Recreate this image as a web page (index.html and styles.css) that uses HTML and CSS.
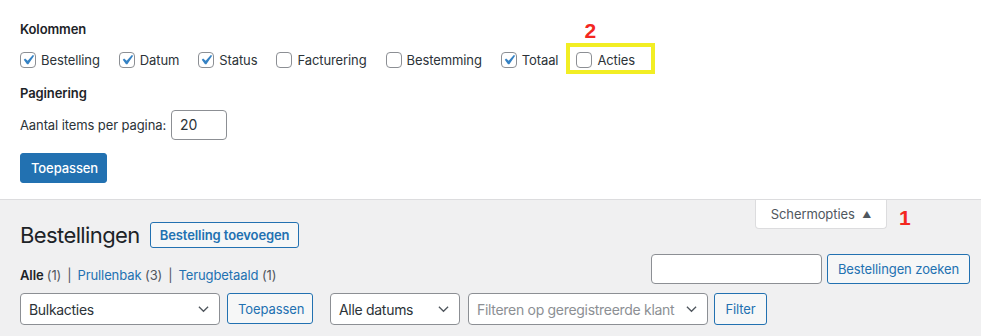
FILE: index.html
```html
<!DOCTYPE html>
<html lang="nl">
<head>
    <meta charset="UTF-8">
    <link rel="stylesheet" href="styles.css">
    <title>Bestellingen</title>
</head>
<body>
    <div class="screen-meta">
        <div class="legend">Kolommen</div>
        <div class="columns">
            <label class="check"><span class="box on"><svg viewBox="0 0 20 20"><path d="M14.83 4.89l1.34.94-5.81 8.38H9.02L5.78 9.67l1.34-1.25 2.57 2.4z"/></svg></span>Bestelling</label>
            <label class="check"><span class="box on"><svg viewBox="0 0 20 20"><path d="M14.83 4.89l1.34.94-5.81 8.38H9.02L5.78 9.67l1.34-1.25 2.57 2.4z"/></svg></span>Datum</label>
            <label class="check"><span class="box on"><svg viewBox="0 0 20 20"><path d="M14.83 4.89l1.34.94-5.81 8.38H9.02L5.78 9.67l1.34-1.25 2.57 2.4z"/></svg></span>Status</label>
            <label class="check"><span class="box"></span>Facturering</label>
            <label class="check"><span class="box"></span>Bestemming</label>
            <label class="check"><span class="box on"><svg viewBox="0 0 20 20"><path d="M14.83 4.89l1.34.94-5.81 8.38H9.02L5.78 9.67l1.34-1.25 2.57 2.4z"/></svg></span>Totaal</label>
            <label class="check marked"><span class="box"></span>Acties
                <span class="highlight"></span>
                <span class="note note-2">2</span>
            </label>
        </div>
        <div class="legend legend-2">Paginering</div>
        <div class="per-page">
            <span>Aantal items per pagina:</span>
            <span class="input num">20</span>
        </div>
        <button class="btn primary">Toepassen</button>
    </div>

    <div class="meta-links">
        <div class="tab">Schermopties <span class="arrow">▲</span></div>
        <span class="note note-1">1</span>
    </div>

    <div class="wrap">
        <div class="title-row">
            <h1>Bestellingen</h1>
            <a class="title-action">Bestelling toevoegen</a>
        </div>
        <div class="list-top">
            <ul class="subsubsub">
                <li class="current">Alle <span class="count">(1)</span></li>
                <li class="sep">|</li>
                <li><a>Prullenbak</a> <span class="count">(3)</span></li>
                <li class="sep">|</li>
                <li><a>Terugbetaald</a> <span class="count">(1)</span></li>
            </ul>
            <div class="search-box">
                <span class="input search"></span>
                <button class="btn">Bestellingen zoeken</button>
            </div>
        </div>
        <div class="tablenav">
            <div class="select bulk">Bulkacties<svg viewBox="0 0 12 8"><path d="M1 1.5l5 5 5-5"/></svg></div>
            <button class="btn apply">Toepassen</button>
            <div class="select dates">Alle datums<svg viewBox="0 0 12 8"><path d="M1 1.5l5 5 5-5"/></svg></div>
            <div class="select customer">Filteren op geregistreerde klant<svg viewBox="0 0 12 8"><path d="M1 1.5l5 5 5-5"/></svg></div>
            <button class="btn filter">Filter</button>
        </div>
    </div>
</body>
</html>
```

FILE: styles.css
```css
*{
    margin: 0;
    padding: 0;
    box-sizing: border-box;
}
body{
    font-family: Inter, "Noto Sans", sans-serif;
    font-size: 13px;
    letter-spacing: -0.1px;
    color: #1d2327;
    background: #f0f0f1;
}

/* screen options panel */
.screen-meta{
    background: #fff;
    border-bottom: 1px solid #dcdcde;
    padding: 20px 20px 16px;
}
.legend{
    font-size: 13px;
    font-weight: 600;
    line-height: 18px;
}
.legend-2{
    margin-top: 14px;
}
.columns{
    display: flex;
    align-items: center;
    height: 20px;
    margin-top: 12px;
}
.check{
    position: relative;
    display: flex;
    align-items: center;
    gap: 5px;
    margin-right: 19px;
    color: #2c3338;
}
.marked{
    margin-left: -1px;
}
.box{
    width: 16px;
    height: 16px;
    border: 1px solid #8c8f94;
    border-radius: 4px;
    background: #fff;
    display: flex;
    align-items: center;
    justify-content: center;
}
.box svg{
    width: 20px;
    height: 20px;
    fill: #3582c4;
    flex: none;
}
.highlight{
    position: absolute;
    left: -10px;
    right: -20px;
    top: -9px;
    bottom: -6px;
    border: 4px solid #f2ee24;
}
.note{
    font-family: "Liberation Sans", Arial, sans-serif;
    font-weight: 700;
    font-size: 21px;
    letter-spacing: 0;
    color: #f3271f;
}
.note-2{
    position: absolute;
    left: 8px;
    top: -33px;
}
.per-page{
    display: flex;
    align-items: center;
    gap: 5px;
    margin-top: 8px;
    color: #2c3338;
}
.input{
    display: block;
    height: 30px;
    border: 1px solid #8c8f94;
    border-radius: 4px;
    background: #fff;
}
.num{
    width: 56px;
    padding: 0 8px;
    line-height: 28px;
    font-size: 14px;
    color: #2c3338;
}
.btn{
    font: inherit;
    letter-spacing: inherit;
    height: 30px;
    padding: 0 10px;
    border: 1px solid #2271b1;
    border-radius: 3px;
    background: #f6f7f7;
    color: #2271b1;
    cursor: pointer;
}
.primary{
    display: block;
    margin-top: 13px;
    width: 87px;
    background: #2271b1;
    color: #fff;
    font-weight: 500;
}

/* tab */
.meta-links{
    float: right;
    position: relative;
    margin-right: 94px;
}
.tab{
    height: 29px;
    width: 132px;
    border: 1px solid #dcdcde;
    border-top: 0;
    border-radius: 0 0 4px 4px;
    background: #fff;
    color: #50575e;
    line-height: 28px;
    text-align: center;
}
.arrow{
    font-size: 9px;
    margin-left: 4px;
    vertical-align: 1px;
}
.note-1{
    position: absolute;
    left: calc(100% + 12px);
    top: 6px;
}

/* page */
.wrap{
    padding: 22px 11px 0 20px;
}
.title-row{
    display: flex;
    align-items: center;
    height: 26px;
}
h1{
    font-size: 22px;
    font-weight: 400;
    letter-spacing: -0.6px;
    line-height: 26px;
}
.title-action{
    margin-left: 10px;
    height: 26px;
    padding: 0 9px;
    line-height: 24px;
    border: 1px solid #2271b1;
    border-radius: 3px;
    background: #f6f7f7;
    color: #2271b1;
    font-weight: 600;
}
.list-top{
    display: flex;
    align-items: flex-end;
    justify-content: space-between;
    margin-top: 6px;
}
.subsubsub{
    list-style: none;
    display: flex;
    gap: 6px;
    line-height: 18px;
}
.subsubsub a{
    color: #2271b1;
}
.current{
    font-weight: 600;
}
.count{
    font-weight: 400;
    color: #50575e;
}
.sep{
    color: #50575e;
}
.search-box{
    display: flex;
    gap: 5px;
}
.search{
    width: 171px;
}
.search-box .btn{
    width: 143px;
    padding: 0;
}
.tablenav{
    display: flex;
    align-items: flex-start;
    margin-top: 9px;
}
.select{
    display: flex;
    align-items: center;
    justify-content: space-between;
    height: 32px;
    padding: 0 10px 0 8px;
    border: 1px solid #8c8f94;
    border-radius: 4px;
    background: #fff;
    font-size: 14px;
    letter-spacing: -0.3px;
    color: #2c3338;
}
.select svg{
    width: 11px;
    height: 8px;
    flex: none;
    fill: none;
    stroke: #50575e;
    stroke-width: 1.4;
}
.bulk{
    width: 200px;
}
.apply{
    margin-left: 7px;
    height: 31px;
    width: 86px;
}
.dates{
    margin-left: 17px;
    width: 130px;
}
.customer{
    margin-left: 8px;
    width: 240px;
    color: #8c8f94;
}
.filter{
    margin-left: 6px;
    height: 32px;
    width: 53px;
}
```
